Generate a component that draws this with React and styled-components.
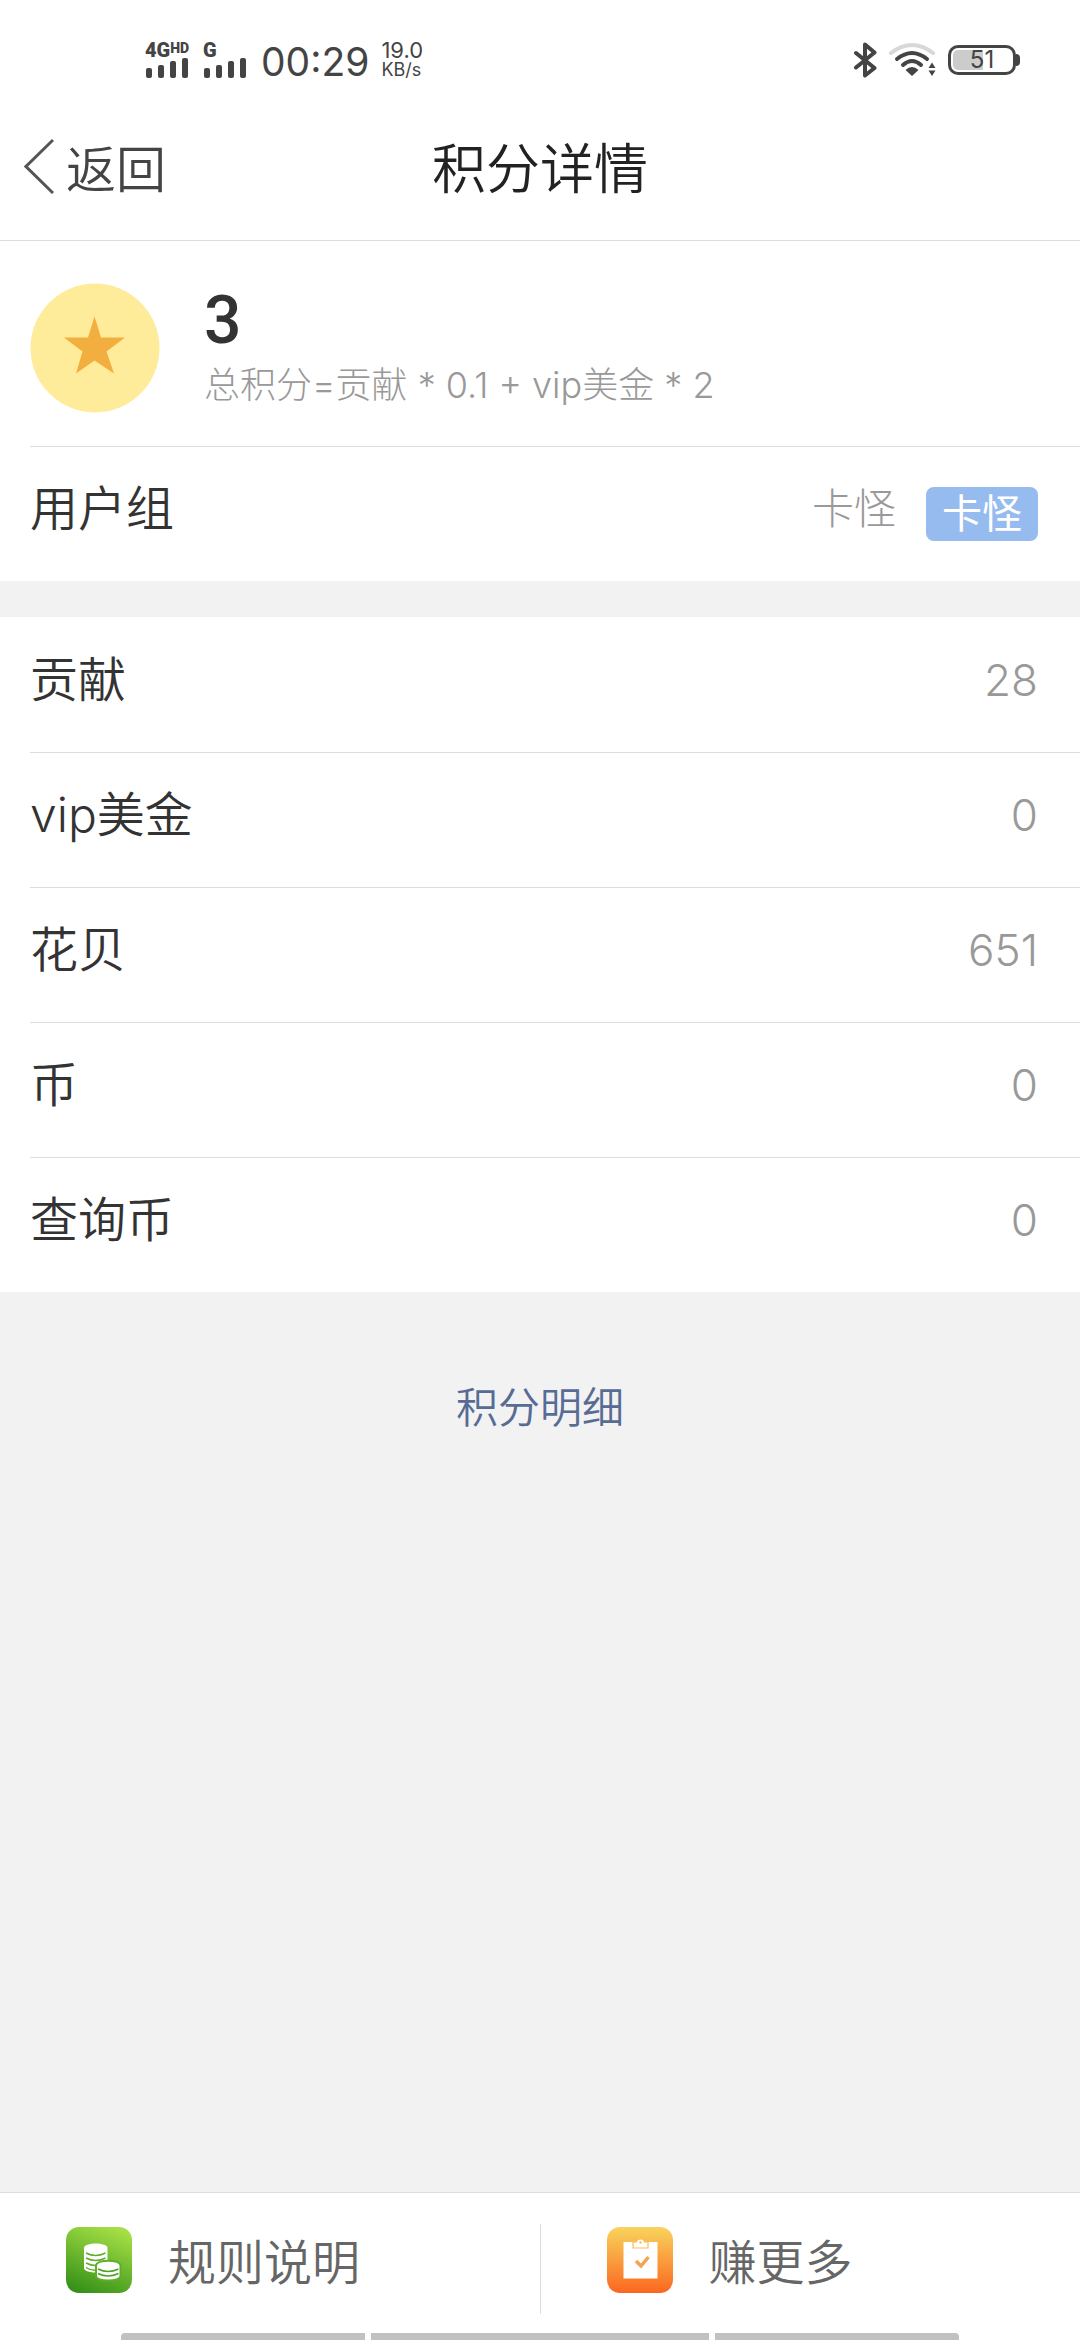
import React from 'react';
import styled, { createGlobalStyle } from 'styled-components';

const GlobalStyle = createGlobalStyle`
  * {
    box-sizing: border-box;
  }

  body {
    margin: 0;
    background: #f2f2f2;
    color: #333;
    font-family: Inter, "Noto Sans CJK SC", sans-serif;
    font-weight: 350;
  }
`;

const Page = styled.div`
  display: flex;
  flex-direction: column;
  min-height: 100vh;
`;

const StatusBar = styled.div`
  display: flex;
  align-items: center;
  justify-content: space-between;
  height: 120px;
  padding: 0 60px 0 145px;
  background: #fff;
  color: #444;
`;

const StatusGroup = styled.div`
  display: flex;
  align-items: center;
  gap: ${(props) => props.$gap}px;
`;

const Signal = styled.div`
  display: flex;
  flex-direction: column;
  width: 46px;
  margin-right: 12px;
`;

const Network = styled.span`
  display: flex;
  height: 16px;
  font-family: Roboto, sans-serif;
  font-size: 20px;
  font-weight: 900;
  line-height: 16px;

  small {
    font-size: 14px;
    line-height: 12px;
  }
`;

const Clock = styled.span`
  font-size: 39px;
  font-weight: 400;
  line-height: 48px;
  padding-top: 4px;
`;

const Speed = styled.span`
  display: flex;
  flex-direction: column;
  margin-left: 12px;
  font-size: 22px;
  font-weight: 400;
  line-height: 20px;

  small {
    font-size: 18px;
  }
`;

const Battery = styled.div`
  display: flex;
  align-items: center;

  &::after {
    content: '';
    width: 4px;
    height: 12px;
    border-radius: 0 4px 4px 0;
    background: #444;
  }
`;

const BatteryBody = styled.div`
  width: 68px;
  height: 30px;
  padding: 2px;
  border: 3px solid #444;
  border-radius: 10px;
`;

const BatteryLevel = styled.div`
  height: 20px;
  border-radius: 5px;
  background: linear-gradient(to right, #ccc ${(props) => props.$level}%, #fff ${(props) => props.$level}%);
  font-size: 24px;
  font-weight: 400;
  line-height: 20px;
  text-align: center;
`;

const Header = styled.header`
  display: grid;
  grid-template-columns: 1fr auto 1fr;
  align-items: center;
  height: 121px;
  padding: 0 24px 20px;
  border-bottom: 1px solid #ddd;
  background: #fff;
`;

const BackButton = styled.button`
  display: flex;
  align-items: center;
  justify-self: start;
  gap: 12px;
  padding: 0;
  border: 0;
  background: none;
  color: #444;
  font: inherit;
  font-size: 50px;
  line-height: 60px;

  svg {
    margin-bottom: 8px;
  }
`;

const Title = styled.h1`
  margin: 0;
  color: #222;
  font-size: 54px;
  font-weight: 350;
  line-height: 60px;
`;

const Section = styled.section`
  margin-bottom: 36px;
  background: #fff;
`;

const Summary = styled.div`
  display: flex;
  align-items: center;
  gap: 44px;
  height: 205px;
  margin-left: 30px;
  padding-top: 8px;
`;

const Total = styled.div`
  font-family: Roboto, sans-serif;
  font-size: 66px;
  font-weight: 500;
  line-height: 74px;
`;

const Formula = styled.p`
  margin: 0;
  color: #999;
  font-size: 36px;
  font-weight: 300;
  line-height: 54px;
`;

const List = styled.dl`
  margin: 0;
`;

const Row = styled.div`
  display: flex;
  align-items: center;
  justify-content: space-between;
  height: 135px;
  margin-left: 30px;
  padding: 0 42px 10px 0;
  border-top: ${(props) => (props.$first ? 'none' : '1px solid #ddd')};
`;

const Label = styled.dt`
  font-size: 48px;
  line-height: 60px;
`;

const Value = styled.dd`
  display: flex;
  align-items: center;
  gap: 30px;
  margin: 0;
  color: #999;
  font-size: ${(props) => (props.$text ? 42 : 44)}px;
  font-weight: 300;
  line-height: 54px;
`;

const Tag = styled.span`
  margin-top: 10px;
  padding: 0 16px;
  border-radius: 8px;
  background: #96bbef;
  color: #fff;
  font-size: 40px;
  font-weight: 400;
`;

const DetailLink = styled.a`
  align-self: center;
  margin-top: 50px;
  color: #576b95;
  font-size: 42px;
  line-height: 60px;
  text-decoration: none;
`;

const Footer = styled.footer`
  display: flex;
  margin-top: auto;
  padding: 31px 0 19px;
  border-top: 1px solid #ddd;
  background: #fff;
`;

const FooterLink = styled.a`
  display: flex;
  flex: 1;
  gap: 36px;
  height: 90px;
  padding: 3px 0 0 66px;
  color: #666;
  font-size: 48px;
  line-height: 72px;
  text-decoration: none;

  & + & {
    border-left: 1px solid #ddd;
  }
`;

const NavHints = styled.div`
  display: flex;
  gap: 6px;
  height: 7px;
  padding: 0 121px;
  background: #fff;
`;

const NavHint = styled.span`
  flex: ${(props) => props.$grow};
  border-radius: ${(props) => props.$radius || 0};
  background: #c1c1c1;
`;

const SignalBars = () => (
  <svg width="46" height="20" viewBox="0 0 46 20" fill="#444">
    <rect x="1" y="10" width="6" height="10" rx="2" />
    <rect x="13" y="7" width="6" height="13" rx="2" />
    <rect x="25" y="3" width="6" height="17" rx="2" />
    <rect x="37" y="0" width="6" height="20" rx="2" />
  </svg>
);

const BluetoothIcon = () => (
  <svg width="26" height="36" viewBox="0 0 26 36" fill="none" stroke="#444" strokeWidth="4" strokeLinecap="round" strokeLinejoin="round">
    <path d="M4 11 22.500 26 13 33.500V2.500L22.500 10.500 4 25.500" />
  </svg>
);

const WifiIcon = () => (
  <svg width="50" height="36" viewBox="0 0 50 36" fill="none" strokeWidth="4" strokeLinecap="round">
    <path d="M3 11Q24 -5 45 11" stroke="#d8d8d8" />
    <path d="M9 17Q24 5 39 17" stroke="#444" />
    <path d="M15 23Q24 15 33 23" stroke="#444" />
    <path d="M17.500 28Q24 22 30.500 28L24 34Z" fill="#444" />
    <path d="M44 20.500 47.500 26H40.500ZM44 34 47.500 28.500H40.500Z" fill="#444" />
  </svg>
);

const BackIcon = () => (
  <svg width="30" height="56" viewBox="0 0 30 56" fill="none" stroke="#555" strokeWidth="3">
    <path d="M29 2 2 28.500 29 55" />
  </svg>
);

const StarIcon = () => (
  <svg width="130" height="130" viewBox="0 0 130 130">
    <circle cx="65" cy="65" r="64.500" fill="#feec9a" />
    <path d="M64.500 33.500 71 54.500H95L76.500 68.500 84 90.500 64.500 77.500 46 90.500 52.500 68.500 34 54.500H58Z" fill="#f2ae3e" />
  </svg>
);

const CoinsIcon = () => (
  <svg width="66" height="66" viewBox="0 0 66 66">
    <defs>
      <linearGradient id="coins" x1="0.700" y1="0" x2="0.300" y2="1">
        <stop offset="0" stopColor="#a5df45" />
        <stop offset="1" stopColor="#389219" />
      </linearGradient>
    </defs>
    <rect width="66" height="66" rx="13" fill="url(#coins)" />
    <path d="M18 21C18 15 41.500 15 41.500 21V41C41.500 47 18 47 18 41Z" fill="#fff" />
    <g fill="none" stroke="#5fae2b" strokeWidth="1.500">
      <path d="M20 26Q29.500 31 39.500 26M20 31Q29.500 36 39.500 31M20 36Q29.500 41 39.500 36M20 40.500Q25 44 32 43" />
      <path d="M30 38.500C30 32 54.500 32 54.500 38.500V49C54.500 55 30 55 30 49Z" fill="#fff" strokeWidth="2" />
      <path d="M32 42Q42 47 52.500 42M32 46.500Q42 51.500 52.500 46.500" stroke="#4ca322" />
    </g>
  </svg>
);

const TaskIcon = () => (
  <svg width="66" height="66" viewBox="0 0 66 66">
    <defs>
      <linearGradient id="task" x1="0" y1="0" x2="0" y2="1">
        <stop offset="0" stopColor="#f8d45c" />
        <stop offset="1" stopColor="#fb671f" />
      </linearGradient>
    </defs>
    <rect width="66" height="66" rx="13" fill="url(#task)" />
    <path d="M16.500 15H50.500V51.500H16.500Z" fill="#fff" />
    <path d="M26 15H29.500C30 11 37 11 37.500 15H41V21H26Z" fill="#fff" stroke="#f9bf55" strokeWidth="1.200" />
    <circle cx="33.500" cy="15.500" r="1.200" fill="#f9bf55" />
    <path d="M29 34 34 39 41.500 30" fill="none" stroke="#f6a351" strokeWidth="3.500" />
  </svg>
);

const credits = [
  { name: '贡献', value: 28 },
  { name: 'vip美金', value: 0 },
  { name: '花贝', value: 651 },
  { name: '币', value: 0 },
  { name: '查询币', value: 0 },
];

const App = () => {
  return (
    <Page>
      <GlobalStyle />
      <StatusBar>
        <StatusGroup $gap={0}>
          <Signal>
            <Network>4G<small>HD</small></Network>
            <SignalBars />
          </Signal>
          <Signal>
            <Network>G</Network>
            <SignalBars />
          </Signal>
          <Clock>00:29</Clock>
          <Speed>
            19.0
            <small>KB/s</small>
          </Speed>
        </StatusGroup>
        <StatusGroup $gap={10}>
          <BluetoothIcon />
          <WifiIcon />
          <Battery>
            <BatteryBody>
              <BatteryLevel $level={51}>51</BatteryLevel>
            </BatteryBody>
          </Battery>
        </StatusGroup>
      </StatusBar>

      <Header>
        <BackButton type="button">
          <BackIcon />
          返回
        </BackButton>
        <Title>积分详情</Title>
      </Header>

      <Section>
        <Summary>
          <StarIcon />
          <div>
            <Total>3</Total>
            <Formula>总积分=贡献 * 0.1 + vip美金 * 2</Formula>
          </div>
        </Summary>
        <List>
          <Row>
            <Label>用户组</Label>
            <Value $text>
              卡怪
              <Tag>卡怪</Tag>
            </Value>
          </Row>
        </List>
      </Section>

      <Section>
        <List>
          {credits.map((credit, index) => (
            <Row key={credit.name} $first={index === 0}>
              <Label>{credit.name}</Label>
              <Value>{credit.value}</Value>
            </Row>
          ))}
        </List>
      </Section>

      <DetailLink href="#detail">积分明细</DetailLink>

      <Footer>
        <FooterLink href="#rules">
          <CoinsIcon />
          规则说明
        </FooterLink>
        <FooterLink href="#earn">
          <TaskIcon />
          赚更多
        </FooterLink>
      </Footer>
      <NavHints>
        <NavHint $grow={244} $radius="4px 0 0 0" />
        <NavHint $grow={338} />
        <NavHint $grow={244} $radius="0 4px 0 0" />
      </NavHints>
    </Page>
  );
};

export default App;
